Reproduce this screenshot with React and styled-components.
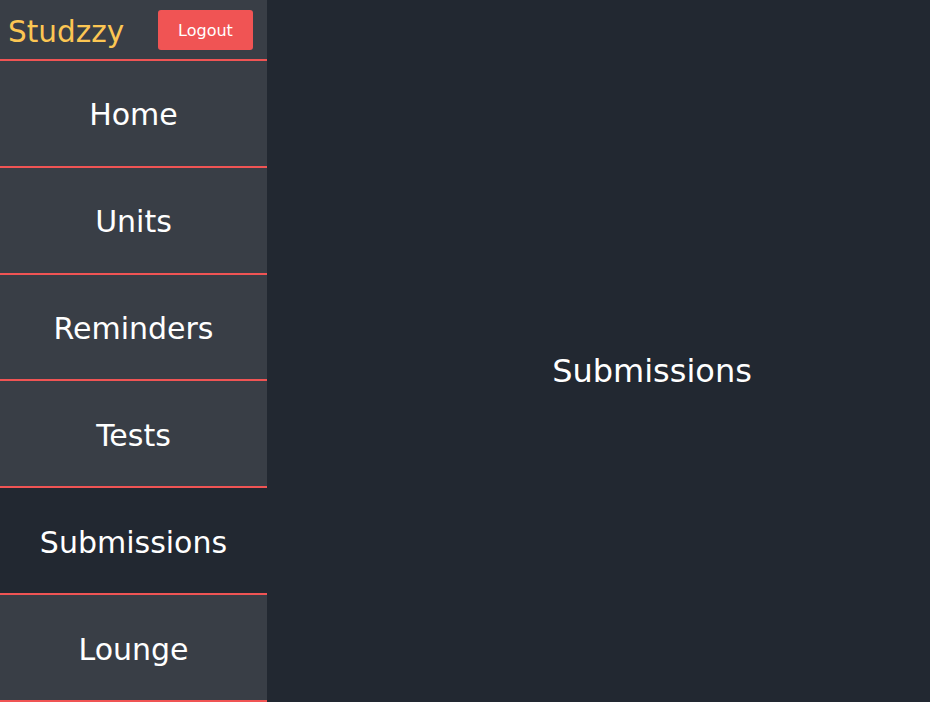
import styled, { createGlobalStyle } from "styled-components";

const GlobalStyle = createGlobalStyle`
    body {
        margin: 0;
        font-family: "DejaVu Sans", sans-serif;
        background-color: #222831;
        overflow: hidden;
    }
`;

const Layout = styled.div`
    display: flex;
    height: 100vh;
`;

const Sidebar = styled.nav`
    width: 267px;
    display: flex;
    flex-direction: column;
    background-color: #393e46;
`;

const Header = styled.div`
    height: 59px;
    flex-shrink: 0;
    display: flex;
    align-items: center;
    justify-content: space-between;
    padding: 0 14px 0 8px;
    border-bottom: 2px solid #f05454;
`;

const Brand = styled.span`
    color: #fcc653;
    font-size: 29.5px;
    margin-top: 4px;
`;

const LogoutButton = styled.button`
    background-color: #f05454;
    color: #ffffff;
    border: none;
    border-radius: 3px;
    width: 95px;
    height: 40px;
    padding-top: 2px;
    font-family: "DejaVu Sans", sans-serif;
    font-size: 16px;
`;

const NavItem = styled.div`
    flex: 1;
    display: flex;
    align-items: center;
    justify-content: center;
    padding-top: 3px;
    color: #ffffff;
    font-size: 30px;
    border-bottom: 2px solid #f05454;
    background-color: ${(p) => (p.$active ? "#222831" : "#393e46")};
`;

const Main = styled.main`
    flex: 1;
    display: flex;
    align-items: center;
    justify-content: center;
    padding: 40px 0 0 107px;
    color: #ffffff;
    font-size: 32px;
`;

const links = ["Home", "Units", "Reminders", "Tests", "Submissions", "Lounge"];

export default function App() {
    return (
        <Layout>
            <GlobalStyle />
            <Sidebar>
                <Header>
                    <Brand>Studzzy</Brand>
                    <LogoutButton>Logout</LogoutButton>
                </Header>
                {links.map((l) => (
                    <NavItem key={l} $active={l === "Submissions"}>{l}</NavItem>
                ))}
            </Sidebar>
            <Main>Submissions</Main>
        </Layout>
    );
}
